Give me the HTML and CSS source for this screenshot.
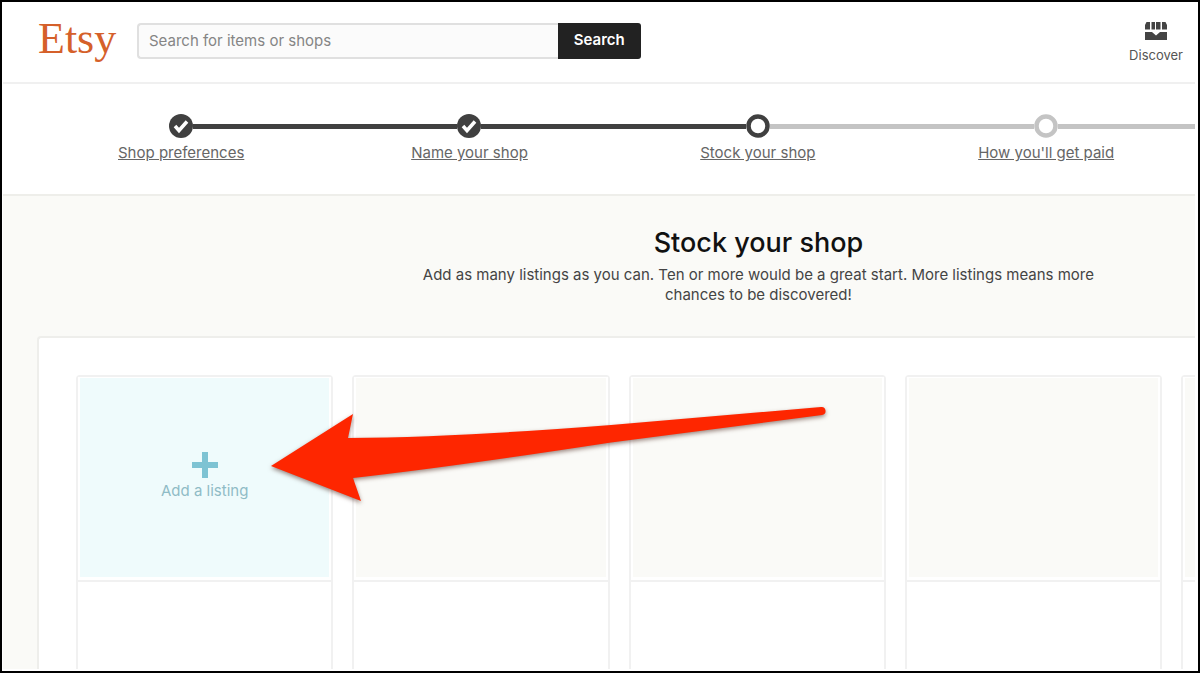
FILE: index.html
```html
<!DOCTYPE html>
<html lang="en">
<head>
<meta charset="utf-8">
<meta name="viewport" content="width=device-width, initial-scale=1">
<title>Etsy - Stock your shop</title>
<link rel="stylesheet" href="styles.css">
</head>
<body>
<div class="page">
  <header class="header">
    <a class="logo" href="#">Etsy</a>
    <form class="search" role="search">
      <input class="search-input" type="search" placeholder="Search for items or shops" aria-label="Search for items or shops">
      <button class="search-button" type="submit">Search</button>
    </form>
    <a class="discover" href="#">
      <svg class="discover-icon" viewBox="0 0 22 18" aria-hidden="true">
        <path d="M1.500 0H5v7.500H0V3zM6.500 0h3.500v7.500H6.500zM11 0h4.500v7.500H11zM17 0h3.500l1.500 3v4.500h-5zM0 10h7l4 3.500 4-3.500h7v8H0z"/>
      </svg>
      <span>Discover</span>
    </a>
  </header>

  <nav class="steps" aria-label="Shop setup">
    <div class="step done first">
      <span class="line"></span>
      <svg class="dot" viewBox="0 0 24 24" aria-hidden="true"><circle class="disc" cx="12" cy="12" r="12"/><path class="tick" d="M6 12l4 4.500 8-9"/></svg>
      <span class="line"></span>
      <a class="label" href="#">Shop preferences</a>
    </div>
    <div class="step done">
      <span class="line"></span>
      <svg class="dot" viewBox="0 0 24 24" aria-hidden="true"><circle class="disc" cx="12" cy="12" r="12"/><path class="tick" d="M6 12l4 4.500 8-9"/></svg>
      <span class="line"></span>
      <a class="label" href="#">Name your shop</a>
    </div>
    <div class="step current">
      <span class="line"></span>
      <svg class="dot" viewBox="0 0 24 24" aria-hidden="true"><circle class="ring" cx="12" cy="12" r="9.500"/></svg>
      <span class="line"></span>
      <a class="label" href="#" aria-current="step">Stock your shop</a>
    </div>
    <div class="step">
      <span class="line"></span>
      <svg class="dot" viewBox="0 0 24 24" aria-hidden="true"><circle class="ring" cx="12" cy="12" r="9.500"/></svg>
      <span class="line"></span>
      <a class="label" href="#">How you'll get paid</a>
    </div>
    <div class="step" aria-hidden="true"><span class="line"></span></div>
  </nav>

  <main class="main">
    <div class="intro">
      <h1 class="title">Stock your shop</h1>
      <p class="lead">Add as many listings as you can. Ten or more would be a great start. More listings means more chances to be discovered!</p>
    </div>
    <section class="panel" aria-label="Listings">
      <div class="card">
        <button class="photo add" type="button">
          <svg class="plus" viewBox="0 0 26 26" aria-hidden="true"><path d="M10 0h6v10h10v6H16v10h-6V16H0v-6h10z"/></svg>
          <span>Add a listing</span>
        </button>
      </div>
      <div class="card"><div class="photo"></div></div>
      <div class="card"><div class="photo"></div></div>
      <div class="card"><div class="photo"></div></div>
      <div class="card"><div class="photo"></div></div>
      <svg class="arrow" viewBox="0 0 560 92" aria-hidden="true">
        <path d="M0 53L82 1L77 25Q190 24 340 12L550-6A4 4 0 0 1 551 2L340 29.500Q180 54 82 65L90 88Z"/>
      </svg>
    </section>
  </main>
</div>
</body>
</html>
```
FILE: styles.css
```css
* {
  box-sizing: border-box;
}

body {
  margin: 0;
  font-family: Inter, "Liberation Sans", sans-serif;
  font-size: 15px;
  color: #444;
}

a {
  color: inherit;
}

.page {
  display: flex;
  flex-direction: column;
  height: 100vh;
  padding: 1px 3px 2px 1px;
  border: 2px solid #000;
  background: #fff;
  overflow: hidden;
}

.header {
  display: flex;
  align-items: center;
  flex: none;
  height: 81px;
  padding: 0 12px 4px 35px;
  border-bottom: 2px solid #f0f0f0;
}

.logo {
  width: 80px;
  margin-right: 19px;
  padding-bottom: 4px;
  font-family: "Liberation Serif", serif;
  font-size: 44px;
  line-height: 48px;
  color: #d5602a;
  text-decoration: none;
}

.search {
  display: flex;
  width: 44%;
  height: 36px;
}

.search-input {
  flex: 1;
  min-width: 0;
  padding: 0 10px;
  border: 2px solid #e0e0e0;
  border-right: 0;
  border-radius: 4px 0 0 4px;
  background: #fbfbfb;
  font: inherit;
  color: #444;
}

.search-input::placeholder {
  color: #858585;
  opacity: 1;
}

.search-button {
  width: 83px;
  padding: 0 0 2px;
  border: 0;
  border-radius: 0 3px 3px 0;
  background: #222;
  font: inherit;
  font-weight: 600;
  color: #fff;
}

.discover {
  display: flex;
  flex-direction: column;
  align-items: center;
  gap: 7px;
  margin-left: auto;
  padding-top: 4px;
  font-size: 13px;
  line-height: 16px;
  color: #555;
  text-decoration: none;
}

.discover-icon {
  width: 22px;
  height: 18px;
  fill: #444;
}

.steps {
  display: grid;
  flex: none;
  grid-template-columns: repeat(5, 24.9%);
  height: 112px;
  padding: 30px 0 0 34px;
  border-bottom: 2px solid #eeeeea;
  overflow: hidden;
}

.step {
  display: grid;
  grid-template-columns: 1fr 24px 1fr;
  grid-template-rows: 24px 20px;
  row-gap: 5px;
  align-items: center;
  color: #c4c4c4;
}

.line {
  height: 5px;
  background: #c4c4c4;
}

.done .line,
.current .line:first-child {
  background: #404040;
}

.first .line:first-child {
  visibility: hidden;
}

.dot {
  width: 24px;
  height: 24px;
}

.disc {
  fill: #404040;
}

.tick {
  fill: none;
  stroke: #fff;
  stroke-width: 3.5;
}

.ring {
  fill: #fff;
  stroke: currentColor;
  stroke-width: 4.5;
}

.current .ring {
  stroke: #404040;
}

.label {
  grid-column: 1 / -1;
  justify-self: center;
  line-height: 20px;
  color: #666;
}

.main {
  display: flex;
  flex: 1;
  flex-direction: column;
  min-height: 0;
  background: #fafaf7;
}

.intro {
  display: flex;
  flex-direction: column;
  align-items: center;
  padding: 30px 0 31px 27%;
  margin-right: 3px;
  text-align: center;
}

.title {
  margin: 0 0 5px;
  font-size: 27px;
  font-weight: 500;
  line-height: 34px;
  color: #111;
}

.lead {
  max-width: 680px;
  margin: 0;
  line-height: 20px;
}

.panel {
  position: relative;
  display: grid;
  flex: 1;
  grid-auto-flow: column;
  grid-auto-columns: 23%;
  gap: 19px;
  min-height: 0;
  margin-left: 34px;
  padding: 37px 0 0 37px;
  border: 2px solid #eeeeeb;
  border-width: 2px 0 0 2px;
  border-radius: 4px 0 0 0;
  background: #fff;
  overflow: hidden;
}

.card {
  border: 2px solid #f1f1f1;
  border-bottom: 0;
  border-radius: 4px 4px 0 0;
}

.photo {
  height: 203px;
  padding: 0;
  border: 2px solid #fff;
  border-width: 1px 2px 3px;
  background: #fafaf7;
  box-shadow: 0 2px 0 #f1f1f1;
}

.add {
  display: flex;
  flex-direction: column;
  align-items: center;
  justify-content: center;
  gap: 3px;
  width: 100%;
  padding-bottom: 3px;
  background: #effbfc;
  font: inherit;
  line-height: 20px;
  color: #8fbcc6;
}

.plus {
  width: 26px;
  height: 26px;
  fill: #7ec3d3;
}

.arrow {
  position: absolute;
  top: 75px;
  left: 232px;
  width: 560px;
  height: 92px;
  fill: #fe2600;
  overflow: visible;
  filter: drop-shadow(0 2px 2px rgba(60, 20, 10, 0.5));
}
```
